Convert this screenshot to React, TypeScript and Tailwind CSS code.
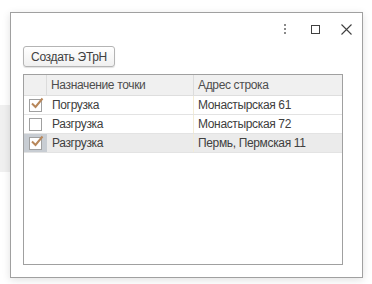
import React from "react";

const rows = [
  { checked: true, kind: "Погрузка", addr: "Монастырская 61", selected: false },
  { checked: false, kind: "Разгрузка", addr: "Монастырская 72", selected: false },
  { checked: true, kind: "Разгрузка", addr: "Пермь, Пермская 11", selected: true },
];

function Check({ checked }: { checked: boolean }) {
  return (
    <div className="relative w-[13px] h-[13px] border border-[#a0a0a0] bg-white">
      {checked && (
        <svg width="14" height="14" viewBox="0 0 14 14" className="absolute -top-[3px] left-[0px]">
          <path d="M2 6.5 L5.5 10 L12.5 1.5" fill="none" stroke="#b8875a" strokeWidth="2" />
        </svg>
      )}
    </div>
  );
}

export default function App() {
  return (
    <main className="relative w-[372px] h-[284px] bg-white overflow-hidden" style={{ fontFamily: '"Liberation Sans", Arial, sans-serif' }}>
      <div className="mt-[105px] h-[67px] w-[20px] bg-[#f0f0f0]" />

      <div className="absolute left-[10px] top-[12px] w-[353px] h-[266px] bg-white border border-[#a0a0a0] shadow-[0_2px_8px_rgba(0,0,0,0.12)] flex flex-col px-[12px]">
        <div className="flex justify-end items-center h-[33px] -mr-[2px]">
          <svg width="4" height="11" viewBox="0 0 4 11" className="mr-[24px]">
            <rect x="1" y="0" width="2" height="2" fill="#8a8a8a" />
            <rect x="1" y="4" width="2" height="2" fill="#8a8a8a" />
            <rect x="1" y="8" width="2" height="2" fill="#8a8a8a" />
          </svg>
          <div className="w-[9px] h-[9px] border border-[#404040] mr-[21px]" />
          <svg width="11" height="11" viewBox="0 0 11 11" className="mr-0">
            <path d="M0.5 0.5 L10.5 10.5 M10.5 0.5 L0.5 10.5" stroke="#404040" strokeWidth="1.1" />
          </svg>
        </div>

        <div className="flex">
          <button className="h-[21px] w-[92px] border border-[#b4b4b4] rounded-[3px] bg-gradient-to-b from-white to-[#f0f0f0] shadow-[0_1px_1px_rgba(0,0,0,0.12)] text-[12px] tracking-[-0.3px] text-[#404040] leading-none">
            Создать ЭТрН
          </button>
        </div>

        <div className="mt-[7px] w-[320px] h-[191px] border border-[#a0a0a0] bg-white flex flex-col text-[12px] tracking-[-0.35px] text-[#404040]">
          <div className="flex h-[21px] bg-[#f0f0f0] border-b border-[#dedede] text-[#4d4d4d]">
            <div className="w-[23px] border-r border-[#dcdcdc]" />
            <div className="w-[147px] border-r border-[#dcdcdc] flex items-center pl-[4px]">Назначение точки</div>
            <div className="flex-1 flex items-center pl-[4px]">Адрес строка</div>
          </div>
          {rows.map((r, i) => (
            <div key={i} className={`flex h-[19px] border-b border-[#e3e3e3] ${r.selected ? "bg-[#ebebeb]" : ""}`}>
              <div className={`w-[23px] flex items-center justify-center ${r.selected ? "bg-[#c8cdd3]" : ""}`}>
                <Check checked={r.checked} />
              </div>
              <div className="w-[147px] border-r border-[#f3ecd6] flex items-center pl-[5px]">{r.kind}</div>
              <div className="flex-1 flex items-center pl-[4px]">{r.addr}</div>
            </div>
          ))}
        </div>
      </div>
    </main>
  );
}
